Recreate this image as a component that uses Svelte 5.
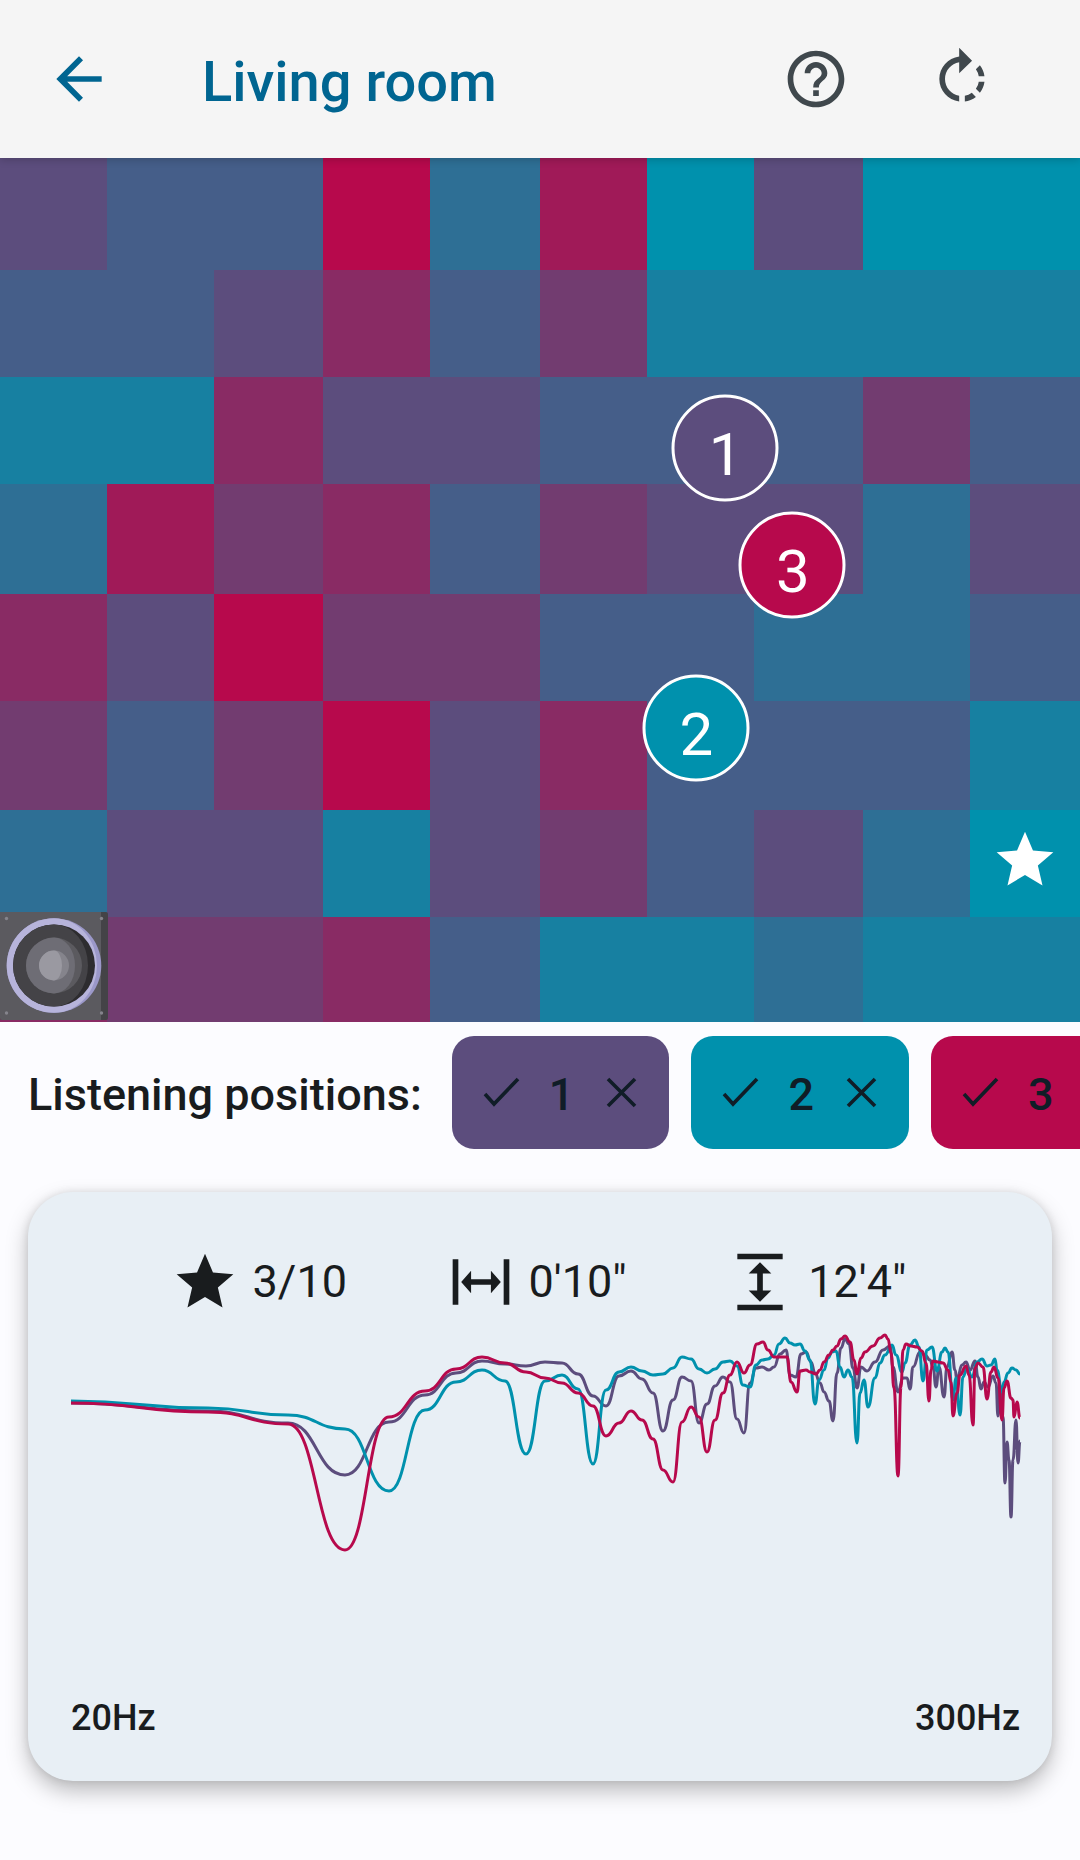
<script>
  const palette = {
    c: '#0091ad', t: '#1780a1', s: '#2e6f95', b: '#455e89', p: '#5c4d7d',
    m: '#723c70', w: '#892b64', d: '#a01a58', r: '#b7094c'
  };

  const rows = [
    'pbbrsdcpcc',
    'bbpwbmtttt',
    'ttwppbbbmb',
    'sdmwbmppsp',
    'wprmmbbssb',
    'mbmrpwbbbt',
    'spptpmbpsc',
    'wmmwbttstt'
  ];
  const best = { row: 6, col: 9 };

  const positions = [
    { id: 1, color: palette.p, x: 67.13, y: 33.56 },
    { id: 2, color: palette.c, x: 64.44, y: 66.03 },
    { id: 3, color: palette.r, x: 73.36, y: 47.05 }
  ];

  const purple = [
    71,1403, 208,1411, 288,1423, 345,1475, 389,1422, 425,1395, 456,1373, 482,1361, 505,1364, 526,1366,
    545,1362, 562,1363, 578,1374, 593,1396, 606,1406, 619,1376, 631,1371, 642,1379, 653,1393, 663,1431,
    673,1400, 682,1377, 691,1381, 699,1423, 707,1404, 715,1386, 723,1377, 730,1382, 737,1419, 744,1433,
    750,1383, 756,1368, 762,1367, 769,1370, 774,1367, 780,1354, 786,1350, 790,1375, 796,1377, 801,1354,
    806,1352, 811,1362, 815,1373, 820,1383, 824,1392, 829,1401, 833,1421, 837,1373, 841,1348, 845,1339,
    849,1344, 853,1368, 857,1388, 861,1367, 867,1371, 875,1362, 883,1350, 890,1346, 893,1367, 898,1392,
    903,1378, 907,1378, 910,1389, 913,1367, 920,1352, 925,1355, 930,1360, 933,1367, 936,1387, 939,1367,
    944,1397, 947,1367, 952,1352, 955,1370, 957,1380, 962,1365, 966,1362, 970,1370, 975,1361, 978,1377,
    981,1389, 984,1382, 988,1387, 993,1376, 996,1383, 998,1416, 1000,1387, 1003,1417, 1005,1483, 1007,1442,
    1009,1460, 1011,1517, 1013,1460, 1016,1420, 1018,1463, 1020,1441
  ];
  const teal = [
    71,1401, 208,1408, 288,1415, 345,1429, 389,1491, 425,1410, 456,1382, 482,1370, 505,1381, 526,1454,
    545,1381, 562,1375, 578,1389, 593,1464, 606,1390, 619,1372, 631,1367, 642,1371, 653,1375, 663,1374,
    673,1368, 682,1357, 691,1359, 699,1369, 707,1373, 715,1369, 723,1362, 730,1361, 737,1366, 743,1385,
    750,1387, 756,1365, 762,1360, 768,1359, 774,1355, 779,1344, 785,1338, 790,1343, 795,1345, 800,1344,
    805,1351, 810,1360, 815,1404, 819,1380, 824,1370, 828,1358, 832,1352, 836,1351, 840,1367, 844,1377,
    848,1370, 852,1377, 857,1443, 860,1393, 864,1380, 868,1407, 875,1378, 880,1363, 885,1355, 892,1345,
    896,1355, 902,1372, 905,1363, 910,1345, 915,1340, 919,1347, 923,1381, 927,1350, 932,1347, 937,1371,
    942,1352, 945,1348, 948,1352, 953,1400, 956,1378, 960,1415, 963,1377, 967,1368, 972,1377, 977,1362,
    982,1359, 987,1366, 991,1365, 995,1359, 997,1370, 1002,1392, 1004,1382, 1008,1373, 1012,1368, 1016,1370,
    1020,1374
  ];
  const red = [
    71,1403, 208,1412, 288,1424, 345,1550, 389,1417, 425,1391, 456,1369, 482,1357, 505,1363, 526,1372,
    545,1378, 562,1383, 578,1393, 593,1406, 606,1436, 619,1423, 631,1411, 642,1420, 653,1439, 663,1470,
    673,1482, 682,1422, 691,1407, 699,1417, 707,1452, 715,1420, 723,1393, 730,1375, 737,1362, 744,1373,
    750,1365, 757,1344, 763,1342, 768,1350, 774,1357, 780,1357, 787,1357, 791,1382, 797,1392, 800,1371,
    806,1370, 810,1372, 816,1374, 820,1370, 824,1362, 829,1355, 833,1350, 837,1346, 841,1339, 845,1336,
    850,1342, 854,1360, 857,1374, 861,1358, 865,1352, 873,1346, 880,1338, 885,1335, 888,1339, 891,1353,
    894,1388, 898,1476, 901,1387, 903,1350, 906,1344, 911,1346, 917,1347, 922,1351, 926,1363, 929,1401,
    931,1370, 933,1361, 938,1362, 943,1363, 948,1370, 951,1382, 953,1416, 957,1393, 960,1375, 966,1366,
    969,1375, 973,1425, 975,1368, 978,1363, 983,1367, 987,1399, 991,1372, 994,1367, 998,1378, 1002,1420,
    1004,1388, 1007,1381, 1011,1398, 1013,1400, 1014,1417, 1017,1402, 1020,1418
  ];

  // Joins the samples with curves that run level through each of them.
  function curve(v) {
    let d = `M${v[0]} ${v[1]}`;
    for (let i = 2; i < v.length; i += 2) {
      const mid = (v[i - 2] + v[i]) / 2;
      d += `C${mid} ${v[i - 1]} ${mid} ${v[i + 1]} ${v[i]} ${v[i + 1]}`;
    }
    return d;
  }

  const series = [
    { color: palette.p, d: curve(purple) },
    { color: palette.c, d: curve(teal) },
    { color: palette.r, d: curve(red) }
  ];
</script>

{#snippet star()}
  <svg class="icon" viewBox="0 0 24 24" aria-hidden="true">
    <path d="M12 17.27L18.18 21l-1.64-7.03L22 9.24l-7.19-.61L12 2 9.19 8.63 2 9.24l5.46 4.73L5.82 21z" />
  </svg>
{/snippet}

<div class="app">
  <header>
    <button class="tool back" aria-label="Back">
      <svg class="icon" viewBox="0 0 24 24"><path d="M20 11H7.83l5.59-5.59L12 4l-8 8 8 8 1.41-1.41L7.83 13H20v-2z" /></svg>
    </button>
    <h1>Living room</h1>
    <button class="tool" aria-label="Help">
      <svg class="icon" viewBox="0 0 24 24"><path d="M11 18h2v-2h-2v2zm1-16C6.48 2 2 6.48 2 12s4.48 10 10 10 10-4.48 10-10S17.52 2 12 2zm0 18c-4.41 0-8-3.59-8-8s3.59-8 8-8 8 3.59 8 8-3.59 8-8 8zm0-14c-2.21 0-4 1.79-4 4h2c0-1.1.9-2 2-2s2 .9 2 2c0 2-3 1.75-3 5h2c0-2.25 3-2.5 3-5 0-2.21-1.79-4-4-4z" /></svg>
    </button>
    <button class="tool" aria-label="Rotate room">
      <svg class="icon" viewBox="0 0 24 24"><path d="M15.55 5.55L11 1v3.07C7.06 4.56 4 7.92 4 12s3.05 7.44 7 7.93v-2.02c-2.84-.48-5-2.94-5-5.91s2.16-5.43 5-5.91V10l4.55-4.45zM19.93 11c-.17-1.39-.72-2.73-1.62-3.89l-1.42 1.42c.54.75.88 1.6 1.02 2.47h2.02zM13 17.9v2.02c1.39-.17 2.74-.71 3.9-1.61l-1.44-1.44c-.75.54-1.59.89-2.46 1.03zm3.89-2.42l1.42 1.41c.9-1.16 1.45-2.5 1.62-3.89h-2.02c-.14.87-.48 1.72-1.02 2.48z" /></svg>
    </button>
  </header>

  <main>
    <section class="room" aria-label="Room map">
      {#each rows as row, r}
        {#each row as key, c}
          <div class="cell" style:background={palette[key]}>
            {#if r === best.row && c === best.col}{@render star()}{/if}
          </div>
        {/each}
      {/each}

      <svg class="speaker" viewBox="0 0 108 108" role="img" aria-label="Subwoofer">
        <rect width="108" height="108" rx="2" fill="#444347" />
        <path d="M0 0H101V108H2Q0 108 0 106Z" fill="#5b5a5f" />
        <g fill="#85848c">
          <circle cx="6.5" cy="6.5" r="1.7" /><circle cx="101.5" cy="6.5" r="1.7" />
          <circle cx="6.5" cy="101" r="1.7" /><circle cx="101.5" cy="101" r="1.7" />
        </g>
        <circle cx="54" cy="53.5" r="47.3" fill="#9b98c9" />
        <path d="M54 6.2A47.3 47.3 0 0 0 54 100.8A43 47.3 0 0 0 54 6.2Z" fill="#b7b4db" />
        <circle cx="54" cy="53.5" r="41" fill="#2d2c2f" />
        <path d="M54 12.5A41 41 0 0 0 54 94.5A34 41 0 0 0 54 12.5Z" fill="#444347" />
        <circle cx="54" cy="53.5" r="28" fill="#5b5a5f" />
        <path d="M54 25.5A28 28 0 0 0 54 81.5A21 28 0 0 0 54 25.5Z" fill="#6e6d75" />
        <circle cx="54" cy="53.5" r="15" fill="#85848c" />
        <path d="M54 38.5A15 15 0 0 0 54 68.5A8 15 0 0 0 54 38.5Z" fill="#9a99a1" />
      </svg>

      {#each positions as p}
        <button class="marker" style:left="{p.x}%" style:top="{p.y}%" style:background={p.color}>{p.id}</button>
      {/each}
    </section>

    <section class="positions">
      <h2>Listening positions:</h2>
      {#each positions as p}
        <div class="chip" style:background={p.color}>
          <button class="toggle" aria-pressed="true">
            <svg class="mark" viewBox="0 0 51 51"><path d="M9 27L18 37L42 12" /></svg>
            <span>{p.id}</span>
          </button>
          <button class="remove" aria-label="Remove position {p.id}">
            <svg class="mark" viewBox="0 0 51 51"><path d="M12 12L39 39M39 12L12 39" /></svg>
          </button>
        </div>
      {/each}
    </section>

    <section class="card" aria-label="Response">
      <div class="stats">
        <div class="stat">{@render star()}<span>3/10</span></div>
        <div class="stat">
          <svg class="icon" viewBox="0 0 24 24" aria-hidden="true"><path d="M2 4h2v16H2zM20 4h2v16h-2zM5 12l3.5-4v3h7V8l3.5 4-3.5 4v-3h-7v3z" /></svg>
          <span>0'10"</span>
        </div>
        <div class="stat">
          <svg class="icon" viewBox="0 0 24 24" aria-hidden="true"><path d="M4 2h16v2H4zM4 20h16v2H4zM12 5l4 4h-3v6h3l-4 4-4-4h3V9H8z" /></svg>
          <span>12'4"</span>
        </div>
      </div>
      <svg class="chart" viewBox="71 1320 949 370" role="img" aria-label="Frequency response from 20Hz to 300Hz">
        {#each series as s}
          <path d={s.d} stroke={s.color} />
        {/each}
      </svg>
      <div class="axis"><span>20Hz</span><span>300Hz</span></div>
    </section>
  </main>
</div>

<style>
  :global(body) {
    margin: 0;
    background: #fcfcff;
  }

  .app {
    min-height: 100vh;
    overflow: hidden;
    font-family: Roboto, 'Liberation Sans', sans-serif;
    color: #191c1e;
  }

  button {
    display: flex;
    align-items: center;
    padding: 0;
    border: 0;
    background: none;
    color: inherit;
    font: inherit;
  }

  .icon {
    display: block;
    flex: none;
    width: 68px;
    height: 68px;
    fill: currentColor;
  }

  header {
    position: relative;
    z-index: 1;
    display: flex;
    align-items: center;
    gap: 78px;
    box-sizing: border-box;
    height: 158px;
    padding: 0 84px 0 45px;
    background: #f5f5f5;
    color: #40484d;
    box-shadow: 0 2px 8px rgba(0, 0, 0, 0.18);
  }

  .back {
    color: #006591;
  }

  h1 {
    flex: 1;
    margin: 0 0 0 11px;
    padding-top: 6px;
    color: #006591;
    font-size: 56px;
    line-height: 66px;
    font-weight: 500;
  }

  .room {
    position: relative;
    display: grid;
    grid-template-columns: 107fr 107fr 109fr 107fr 110fr 107fr 107fr 109fr 107fr 110fr;
    grid-template-rows: 112fr 107fr 107fr 110fr 107fr 109fr 107fr 105fr;
    aspect-ratio: 5 / 4;
  }

  .cell {
    display: flex;
    align-items: center;
    justify-content: center;
    box-sizing: border-box;
    min-width: 0;
    min-height: 0;
    padding-bottom: 8px;
    color: #fff;
  }

  .speaker {
    position: absolute;
    left: 0;
    bottom: 2px;
    width: 10%;
  }

  .marker {
    position: absolute;
    justify-content: center;
    box-sizing: border-box;
    width: 107px;
    height: 107px;
    padding: 13px 0 0 1px;
    border: 3px solid #fff;
    border-radius: 50%;
    color: #fff;
    font-size: 60px;
    line-height: 70px;
    transform: translate(-50%, -50%);
  }

  .positions {
    display: flex;
    align-items: center;
    gap: 22px;
    padding: 14px 0 43px 28px;
  }

  h2 {
    flex: none;
    margin: 0 8px 0 0;
    padding-top: 4px;
    font-size: 45px;
    line-height: 68px;
    font-weight: 500;
  }

  .chip {
    display: flex;
    flex: none;
    gap: 22px;
    box-sizing: border-box;
    height: 113px;
    padding: 0 22px 0 24px;
    border-radius: 22px;
    color: #101d27;
    font-size: 45px;
    font-weight: 500;
  }

  .toggle {
    gap: 22px;
  }

  .toggle span {
    padding-top: 4px;
  }

  .mark {
    display: block;
    width: 51px;
    height: 51px;
    fill: none;
    stroke: currentColor;
    stroke-width: 3.6;
  }

  .card {
    margin: 0 28px;
    padding: 56px 32px 39px 43px;
    border-radius: 45px;
    background: #e8eff5;
    box-shadow: 0 10px 22px rgba(0, 0, 0, 0.26), 0 0 8px rgba(0, 0, 0, 0.1);
  }

  .stats {
    display: flex;
    justify-content: space-evenly;
    padding-right: 14px;
    font-size: 45px;
    line-height: 68px;
  }

  .stat {
    display: flex;
    align-items: center;
    gap: 14px;
  }

  .chart {
    display: block;
    margin-top: 4px;
    overflow: visible;
    fill: none;
    stroke-width: 3;
    stroke-linejoin: round;
  }

  .axis {
    display: flex;
    justify-content: space-between;
    margin-top: 4px;
    font-size: 36px;
    line-height: 48px;
    font-weight: 500;
  }
</style>
